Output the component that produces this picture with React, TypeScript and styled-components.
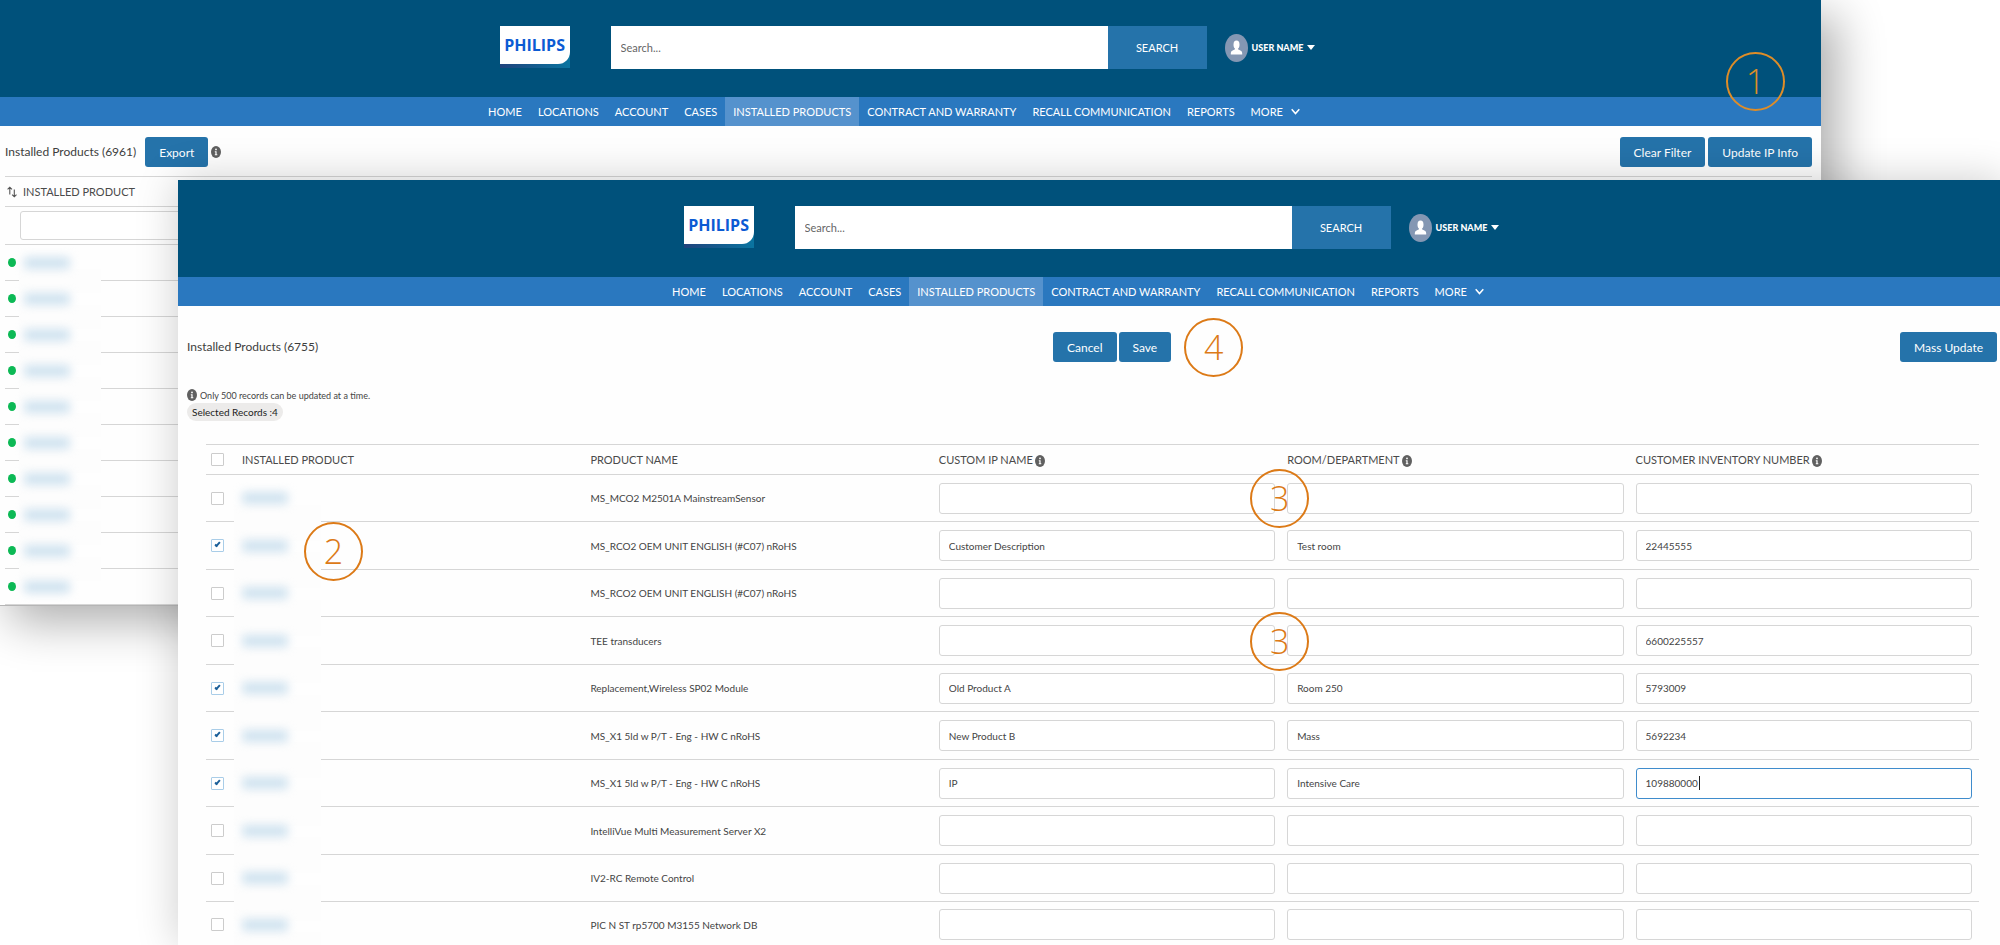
import React from 'react';
import styled, { createGlobalStyle } from 'styled-components';

const GlobalStyle = createGlobalStyle`
  *, *::before, *::after { box-sizing: border-box; }
  html, body { margin: 0; padding: 0; background: #fff; }
  body { font-family: Lato, "Open Sans", sans-serif; font-size: 10px; color: #444; }
  button, input { font-family: inherit; }
`;

const navy = '#00517b';
const navBlue = '#2a78bf';
const actionBlue = '#2573aa';
const line = '#d6d6d6';

const Canvas = styled.main`
  display: grid;
  grid-template-columns: minmax(0, 1fr);
  min-height: 100vh;
  overflow: hidden;
`;

const Window = styled.section`
  grid-area: 1 / 1;
  position: relative;
  background: #fefefe;
`;

const BackWindow = styled(Window)`
  margin: 0 179px auto -6px;
  border-bottom: 1px solid #b5b5b5;
  box-shadow: 16px 16px 44px rgba(0, 0, 0, 0.32);
`;

const FrontWindow = styled(Window)`
  margin: 180px -5px 0 178px;
  box-shadow: 0 0 40px rgba(0, 0, 0, 0.2);
`;

/* ---------- site header ---------- */

const Header = styled.header`
  display: flex;
  justify-content: center;
  align-items: center;
  padding: 26px 0 28px;
  background: ${navy};
`;

const LogoBase = styled.a`
  align-self: flex-start;
  display: block;
  width: 70px;
  height: 42px;
  margin-right: 41px;
  background: linear-gradient(90deg, #20437c, #0a74a0);
  text-decoration: none;
`;

const LogoPlate = styled.span`
  display: block;
  height: 38px;
  border-bottom-right-radius: 12px;
  background: #fff;
  color: #0b5bd3;
  font: 700 16px/38px "Open Sans", sans-serif;
  text-align: center;
`;

const SearchForm = styled.form`
  flex: 0 1 596px;
  display: flex;
  height: 43px;
`;

const SearchInput = styled.input`
  flex: 1;
  min-width: 0;
  padding: 0 10px;
  border: 0;
  border-radius: 0;
  background: #fff;
  color: #444;
  font-size: 11px;
  &::placeholder { color: #666; opacity: 1; }
`;

const SearchButton = styled.button`
  width: 99px;
  border: 0;
  background: ${actionBlue};
  color: #fff;
  font-size: 11px;
`;

const UserMenu = styled.button`
  display: flex;
  align-items: center;
  gap: 4px;
  margin-left: 18px;
  padding: 0;
  border: 0;
  background: none;
  color: #fff;
  font-size: 9px;
  font-weight: 900;
`;

const Nav = styled.nav`
  display: flex;
  justify-content: center;
  height: 29px;
  padding-right: 27px;
  background: ${navBlue};
`;

const NavLink = styled.a<{ $active?: boolean }>`
  display: flex;
  align-items: center;
  gap: 8px;
  padding: 0 8px;
  background: ${(p) => (p.$active ? '#5592cd' : 'transparent')};
  color: #fff;
  font-size: 11px;
  text-decoration: none;
  white-space: nowrap;
`;

/* ---------- shared parts ---------- */

const Title = styled.h1`
  margin: 0 6px 0 0;
  color: #3d3d3d;
  font-size: 12px;
  font-weight: 400;
  line-height: 26px;
`;

const ActionButton = styled.button`
  height: 30px;
  padding: 0 14px;
  border: 0;
  border-radius: 3px;
  background: ${actionBlue};
  color: #fff;
  font-size: 12px;
  white-space: nowrap;
`;

const Toolbar = styled.div`
  display: flex;
  justify-content: space-between;
  align-items: center;
`;

const Group = styled.div<{ $gap: number }>`
  position: relative;
  display: flex;
  align-items: center;
  gap: ${(p) => p.$gap}px;
`;

const Marker = styled.span`
  position: absolute;
  z-index: 2;
  width: 59px;
  height: 59px;
  border: 2px solid #dc7a17;
  border-radius: 50%;
  color: #dc7a17;
  font: 300 34px/54px "Open Sans", sans-serif;
  text-align: center;
`;

const WindowMarker = styled(Marker)`
  top: 52px;
  right: 36px;
  border-color: #df8d27;
  color: #df8d27;
`;

const SaveMarker = styled(Marker)`
  left: calc(100% + 13px);
`;

const ProductMarker = styled(Marker)`
  top: 0;
  left: 67px;
`;

const FieldMarker = styled(Marker)`
  top: calc(50% - 29px);
  right: -27px;
`;

const Table = styled.table`
  border-collapse: collapse;
  table-layout: fixed;
`;

const HeadCell = styled.th`
  height: 30px;
  padding: 0 7px 0 5px;
  border-top: 1px solid ${line};
  border-bottom: 1px solid ${line};
  color: #4a4a4a;
  font-size: 11px;
  font-weight: 400;
  text-align: left;
  white-space: nowrap;
  svg { margin-left: 2px; vertical-align: -3px; }
`;

const Field = styled.input<{ $active?: boolean }>`
  display: block;
  width: 100%;
  height: 31px;
  padding: 0 9px;
  border: 1px solid ${(p) => (p.$active ? '#3f8ccc' : '#d6d6d6')};
  border-radius: 3px;
  background: #fff;
  color: #444;
  font-size: 10px;
  outline: 0;
`;

const Redacted = styled.span`
  position: relative;
  z-index: 1;
  display: block;
  width: 46px;
  height: 12px;
  border-radius: 4px;
  background: #cfe2ef;
  filter: blur(5px);
`;

const Patch = styled.span`
  position: absolute;
  top: 30px;
  left: -3px;
  width: 87px;
  height: 36px;
  background: #fdfdfd;
`;

/* ---------- back window ---------- */

const BackBody = styled.div`
  padding: 11px 9px 0 11px;
`;

const BackTable = styled(Table)`
  width: 100%;
  margin-top: 9px;
`;

const BackHead = styled(HeadCell)`
  padding: 0 2px;
  svg { margin: 0 6px 0 0; vertical-align: -2px; }
`;

const FilterCell = styled.td`
  height: 38px;
  padding: 0 0 0 15px;
  border-bottom: 1px solid ${line};
`;

const FilterInput = styled(Field)`
  width: 300px;
  height: 29px;
`;

const StatusRow = styled.tr`
  height: 36px;
`;

const StatusCell = styled.td`
  position: relative;
  padding: 0 3px;
  border-bottom: 1px solid ${line};
`;

const StatusPatch = styled(Patch)`
  top: 24px;
  left: 14px;
  width: 82px;
  height: 24px;
`;

const StatusItem = styled.div`
  display: flex;
  align-items: center;
  gap: 8px;
`;

const Dot = styled.span`
  width: 8px;
  height: 9px;
  border-radius: 50%;
  background: #0cb955;
`;

/* ---------- front window ---------- */

const FrontBody = styled.div`
  padding: 26px 8px 0 9px;
`;

const Note = styled.p`
  display: flex;
  align-items: center;
  gap: 3px;
  height: 16px;
  margin: 25px 0 0;
  font-size: 9px;
`;

const Pill = styled.span`
  display: inline-block;
  height: 18px;
  padding: 0 5px;
  border-radius: 9px;
  background: #ecebea;
  color: #222;
  font-size: 10px;
  line-height: 18px;
  vertical-align: top;
`;

const TableWrap = styled.div`
  padding: 23px 18px 0 19px;
`;

const FrontTable = styled(Table)`
  width: 100%;
`;

const CheckHead = styled(HeadCell)`
  width: 31px;
`;

const Row = styled.tr`
  height: 47px;
  &:nth-child(even) { height: 48px; }
  &:last-child { height: 42px; }
  &:last-child td { padding-top: 4px; border-bottom: 0; }
`;

const Cell = styled.td`
  position: relative;
  padding: 0 7px 0 5px;
  border-bottom: 1px solid ${line};
  font-size: 10px;
  white-space: nowrap;
`;

const Check = styled.input`
  appearance: none;
  display: block;
  width: 13px;
  height: 13px;
  margin: 0;
  border: 1px solid #ccc;
  border-radius: 1px;
  background: #fff;
  &:checked { border-color: #a9cde8; }
  &:checked::after {
    content: '';
    display: block;
    width: 3px;
    height: 6px;
    margin: 1px 0 0 4px;
    border: solid #1b5f99;
    border-width: 0 2px 2px 0;
    transform: rotate(42deg);
  }
`;

const FieldCaret = styled.span`
  position: absolute;
  top: calc(50% - 7px);
  left: 68px;
  width: 1px;
  height: 14px;
  background: #222;
`;

const InfoIcon = () => (
  <svg width="10" height="12" viewBox="0 0 10 12" aria-hidden="true">
    <ellipse cx="5" cy="6" rx="5" ry="6" fill="#606060" />
    <circle cx="5" cy="3.4" r="0.9" fill="#fff" />
    <path d="M3.8 5.2h1.8v3h.7v1H3.8v-1h.6v-2h-.6z" fill="#fff" />
  </svg>
);

const SortIcon = () => (
  <svg width="10" height="12" viewBox="0 0 10 12" fill="none" stroke="#555" strokeWidth="1.1" aria-hidden="true">
    <path d="M2.8 8.5V1.2M.6 3.4l2.2-2.2L5 3.4M7.3 3.5v7.3M5.1 8.6l2.2 2.2 2.2-2.2" />
  </svg>
);

const AvatarIcon = () => (
  <svg width="23" height="28" viewBox="0 0 23 28" aria-hidden="true">
    <ellipse cx="11.5" cy="14" rx="11.5" ry="14" fill="#8497b3" />
    <ellipse cx="11.5" cy="10.8" rx="3" ry="4.2" fill="#fff" />
    <path d="M5.8 20.6v-1.4c0-2 1.6-2.6 3.8-3.6.6-.3.6-1 .2-1.8h3.4c-.4.8-.4 1.5.2 1.8 2.2 1 3.8 1.6 3.8 3.6v1.4z" fill="#fff" />
  </svg>
);

const CaretIcon = () => (
  <svg width="8" height="5" viewBox="0 0 8 5" aria-hidden="true">
    <path d="M0 0h8L4 5z" fill="#fff" />
  </svg>
);

const ChevronIcon = () => (
  <svg width="9" height="7" viewBox="0 0 9 7" fill="none" stroke="#fff" strokeWidth="1.5" aria-hidden="true">
    <path d="M.7 1.2 4.5 5.6 8.3 1.2" />
  </svg>
);

const links = [
  'HOME', 'LOCATIONS', 'ACCOUNT', 'CASES', 'INSTALLED PRODUCTS',
  'CONTRACT AND WARRANTY', 'RECALL COMMUNICATION', 'REPORTS', 'MORE',
];

const SiteHeader = () => (
  <>
    <Header>
      <LogoBase href="#home"><LogoPlate>PHILIPS</LogoPlate></LogoBase>
      <SearchForm role="search" onSubmit={(e) => e.preventDefault()}>
        <SearchInput type="text" placeholder="Search..." aria-label="Search" />
        <SearchButton type="submit">SEARCH</SearchButton>
      </SearchForm>
      <UserMenu type="button"><AvatarIcon />USER NAME<CaretIcon /></UserMenu>
    </Header>
    <Nav>
      {links.map((label) => (
        <NavLink key={label} href="#nav" $active={label === 'INSTALLED PRODUCTS'}>
          {label}
          {label === 'MORE' && <ChevronIcon />}
        </NavLink>
      ))}
    </Nav>
  </>
);

type Product = { name: string; checked?: boolean; custom?: string; room?: string; inventory?: string; focused?: boolean };

const products: Product[] = [
  { name: 'MS_MCO2 M2501A MainstreamSensor' },
  { name: 'MS_RCO2 OEM UNIT ENGLISH (#C07) nRoHS', checked: true, custom: 'Customer Description', room: 'Test room', inventory: '22445555' },
  { name: 'MS_RCO2 OEM UNIT ENGLISH (#C07) nRoHS' },
  { name: 'TEE transducers', inventory: '6600225557' },
  { name: 'Replacement,Wireless SP02 Module', checked: true, custom: 'Old Product A', room: 'Room 250', inventory: '5793009' },
  { name: 'MS_X1 5ld w P/T - Eng - HW C nRoHS', checked: true, custom: 'New Product B', room: 'Mass', inventory: '5692234' },
  { name: 'MS_X1 5ld w P/T - Eng - HW C nRoHS', checked: true, custom: 'IP', room: 'Intensive Care', inventory: '109880000', focused: true },
  { name: 'IntelliVue Multi Measurement Server X2' },
  { name: 'IV2-RC Remote Control' },
  { name: 'PIC N ST rp5700 M3155 Network DB' },
];

const InstalledList = () => (
  <BackWindow>
    <SiteHeader />
    <WindowMarker>1</WindowMarker>
    <BackBody>
      <Toolbar>
        <Group $gap={3}>
          <Title>Installed Products (6961)</Title>
          <ActionButton type="button">Export</ActionButton>
          <InfoIcon />
        </Group>
        <Group $gap={3}>
          <ActionButton type="button">Clear Filter</ActionButton>
          <ActionButton type="button">Update IP Info</ActionButton>
        </Group>
      </Toolbar>
      <BackTable>
        <thead>
          <tr><BackHead scope="col"><SortIcon />INSTALLED PRODUCT</BackHead></tr>
        </thead>
        <tbody>
          <tr><FilterCell><FilterInput type="text" aria-label="Filter by installed product" /></FilterCell></tr>
          {products.map((_, i) => (
            <StatusRow key={i}>
              <StatusCell>
                {i < products.length - 1 && <StatusPatch />}
                <StatusItem><Dot /><Redacted /></StatusItem>
              </StatusCell>
            </StatusRow>
          ))}
        </tbody>
      </BackTable>
    </BackBody>
  </BackWindow>
);

const MassUpdate = () => (
  <FrontWindow>
    <SiteHeader />
    <FrontBody>
      <Toolbar>
        <Title>Installed Products (6755)</Title>
        <Group $gap={2}>
          <ActionButton type="button">Cancel</ActionButton>
          <ActionButton type="button">Save</ActionButton>
          <SaveMarker>4</SaveMarker>
        </Group>
        <ActionButton type="button">Mass Update</ActionButton>
      </Toolbar>
      <Note><InfoIcon />Only 500 records can be updated at a time.</Note>
      <Pill>Selected Records :4</Pill>
      <TableWrap>
        <FrontTable>
          <thead>
            <tr>
              <CheckHead scope="col"><Check type="checkbox" aria-label="Select all" /></CheckHead>
              <HeadCell scope="col">INSTALLED PRODUCT</HeadCell>
              <HeadCell scope="col">PRODUCT NAME</HeadCell>
              <HeadCell scope="col">CUSTOM IP NAME<InfoIcon /></HeadCell>
              <HeadCell scope="col">ROOM/DEPARTMENT<InfoIcon /></HeadCell>
              <HeadCell scope="col">CUSTOMER INVENTORY NUMBER<InfoIcon /></HeadCell>
            </tr>
          </thead>
          <tbody>
            {products.map((p, i) => (
              <Row key={i}>
                <Cell><Check type="checkbox" defaultChecked={p.checked} aria-label={`Select ${p.name}`} /></Cell>
                <Cell>
                  <Patch />
                  <Redacted />
                  {i === 1 && <ProductMarker>2</ProductMarker>}
                </Cell>
                <Cell>{p.name}</Cell>
                <Cell>
                  <Field type="text" defaultValue={p.custom} aria-label="Custom IP name" />
                  {(i === 0 || i === 3) && <FieldMarker>3</FieldMarker>}
                </Cell>
                <Cell><Field type="text" defaultValue={p.room} aria-label="Room or department" /></Cell>
                <Cell>
                  <Field type="text" defaultValue={p.inventory} $active={p.focused} aria-label="Customer inventory number" />
                  {p.focused && <FieldCaret />}
                </Cell>
              </Row>
            ))}
          </tbody>
        </FrontTable>
      </TableWrap>
    </FrontBody>
  </FrontWindow>
);

export default function App() {
  return (
    <>
      <GlobalStyle />
      <Canvas>
        <InstalledList />
        <MassUpdate />
      </Canvas>
    </>
  );
}
